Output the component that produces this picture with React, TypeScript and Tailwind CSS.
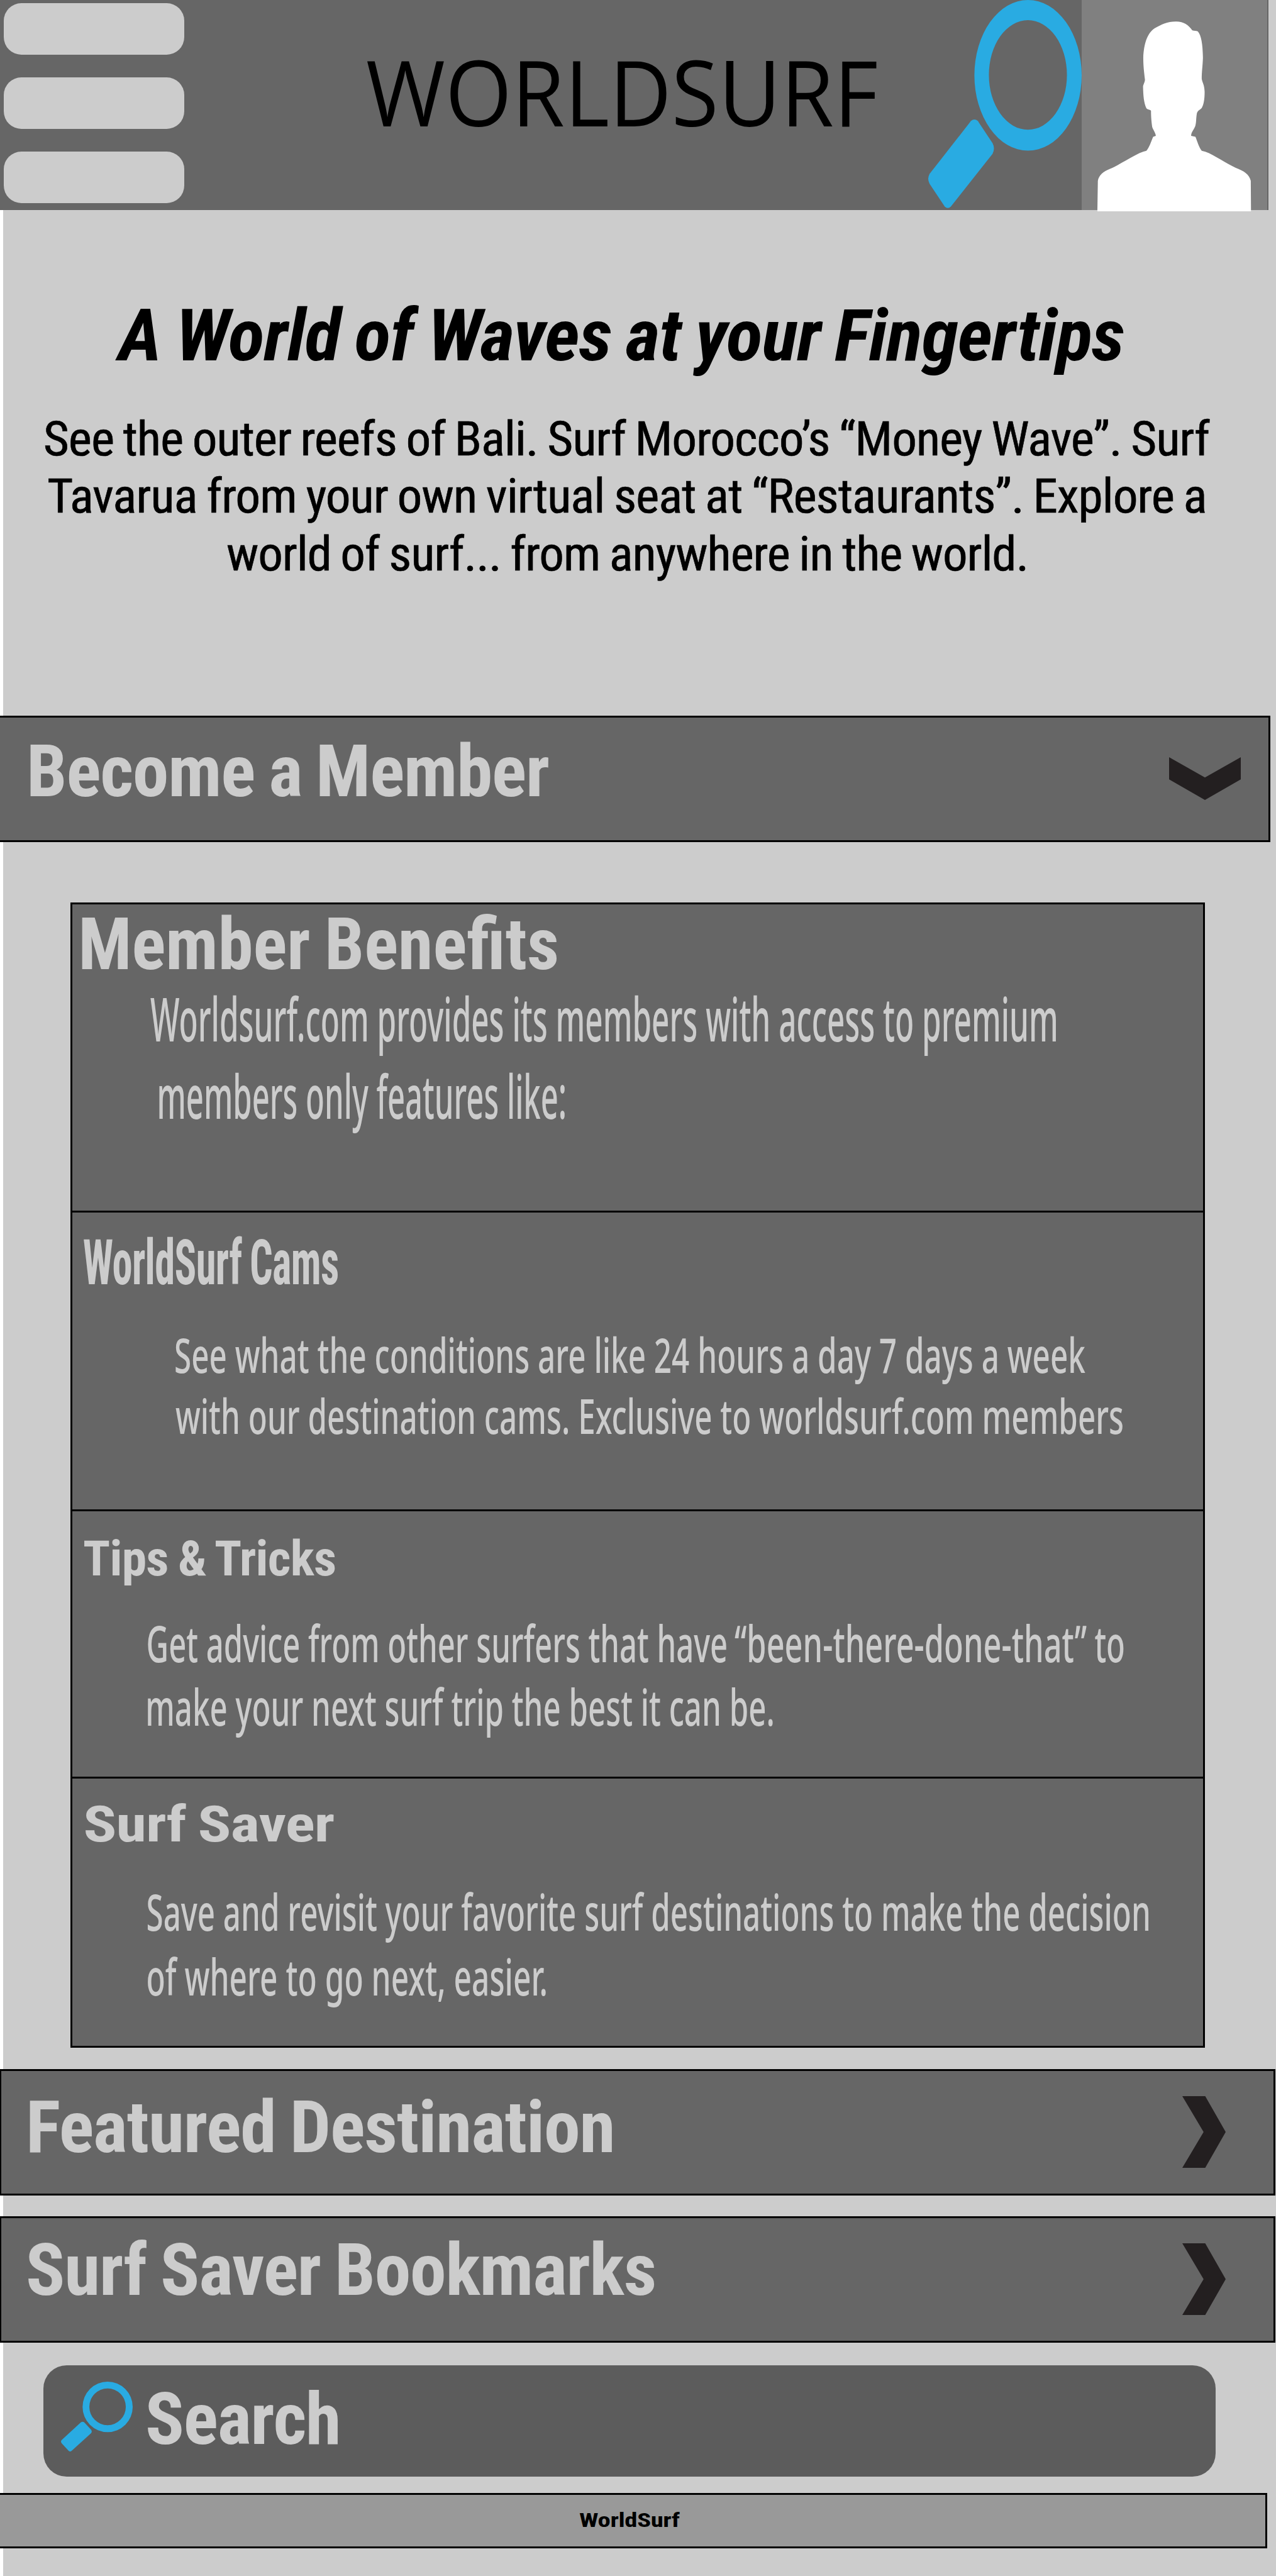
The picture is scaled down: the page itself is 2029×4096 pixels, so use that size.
import { useLayoutEffect, useRef, useState } from "react";

type LineProps = { text: string; className: string };

/** One line of text, stretched or squeezed so that its ink fills the width of its box. */
function Line({ text, className }: LineProps) {
  const box = useRef<HTMLDivElement>(null);
  const [transform, setTransform] = useState("none");

  useLayoutEffect(() => {
    const el = box.current;
    const ctx = document.createElement("canvas").getContext("2d");
    if (!el || !ctx) return;
    const cs = getComputedStyle(el);
    ctx.font = `${cs.fontStyle} ${cs.fontWeight} ${cs.fontSize} ${cs.fontFamily}`;
    const m = ctx.measureText(text);
    const tracking = (parseFloat(cs.letterSpacing) || 0) * (text.length - 1);
    const wordGaps = (parseFloat(cs.wordSpacing) || 0) * (text.split(" ").length - 1);
    const ink = m.actualBoundingBoxLeft + m.actualBoundingBoxRight + tracking + wordGaps;
    const scale = parseFloat(cs.width) / ink;
    setTransform(`translateX(${m.actualBoundingBoxLeft * scale}px) scaleX(${scale})`);
  }, [text]);

  return (
    <div ref={box} className={`whitespace-nowrap ${className}`}>
      <span className="inline-block origin-left align-top" style={{ transform }}>
        {text}
      </span>
    </div>
  );
}

function Magnifier({ className }: { className: string }) {
  return (
    <svg className={className} viewBox="129 0 635 1054" preserveAspectRatio="none" fill="#29abe2">
      <path
        fillRule="evenodd"
        d="M320 378A222 378 0 1 1 764 378A222 378 0 1 1 320 378ZM380 376A161.500 275 0 1 0 703 376A161.500 275 0 1 0 380 376Z"
      />
      <path d="M306 607Q320 592 334 607L395 718Q407 745 395 772L223 1036Q210 1052 197 1036L135 923Q123 897 135 872Z" />
    </svg>
  );
}

function Avatar() {
  return (
    <svg
      className="block h-[336px] w-[295px] shrink-0"
      viewBox="763 0 768 1061"
      preserveAspectRatio="none"
      fill="#fff"
    >
      <path d="M828 1061L830 908C834 880 852 862 880 848C910 832 935 812 1002 769Q1018 760 1031 757C1045 737 1050 710 1059 687L1070 682C1069 668 1060 655 1055 638C1052 610 1050 590 1050 556C1045 549 1037 552 1031 544C1020 515 1018 480 1017 434C1019 420 1024 415 1025 400C1021 360 1018 330 1018 290C1020 220 1035 165 1065 142C1095 121 1120 107 1155 108C1185 108 1205 125 1221 152C1228 156 1237 153 1244 158C1258 178 1264 220 1265 290C1264 330 1260 360 1260 396C1263 415 1271 425 1272 460C1272 500 1268 525 1260 542C1252 552 1245 552 1240 568C1236 595 1238 615 1233 634C1226 655 1217 662 1216 682L1234 687C1242 710 1247 737 1260 757Q1275 761 1290 769C1335 797 1365 822 1400 842C1435 858 1457 875 1463 908L1464 1061Z" />
    </svg>
  );
}

function ChevronDown() {
  return (
    <svg className="mt-[63px] h-[68px] w-[114px]" viewBox="0 0 88 133" preserveAspectRatio="none" fill="#231f20">
      <path d="M0 0L44 63L88 0V69L44 133L0 69Z" />
    </svg>
  );
}

function ChevronRight() {
  return (
    <svg className="mt-[40px] h-[114px] w-[69px]" viewBox="0 0 53 217" preserveAspectRatio="none" fill="#231f20">
      <path d="M0 0H28L53 108.500L28 217H0L26 108.500Z" />
    </svg>
  );
}

const bar = "flex justify-between border-y-[3px] border-r-[3px] border-black bg-[#666] text-[#ccc]";
const condensed = "font-['Roboto_Condensed','Roboto',sans-serif] font-bold [word-spacing:-0.03em]";
const bold = `${condensed} tracking-[-0.01em]`;
const heading = `${bold} text-[115px] leading-[115px]`;
const body = "font-['Noto_Sans','Open_Sans',sans-serif] font-medium";

export default function App() {
  return (
    <div className="h-[4096px] w-[2029px] overflow-hidden bg-[linear-gradient(to_right,#fff_5px,#ccc_5px)]">
      <header className="flex h-[334px] w-[2017px] bg-[#666]">
        <div className="flex w-[584px] shrink-0 flex-col gap-[36px] pt-[5px] pl-[6px]">
          <div className="h-[82px] w-[287px] rounded-[28px] bg-[#ccc]" />
          <div className="h-[82px] w-[287px] rounded-[28px] bg-[#ccc]" />
          <div className="h-[82px] w-[287px] rounded-[28px] bg-[#ccc]" />
        </div>
        <div className="w-[892px] shrink-0 pt-[73px]">
          <Line
            text="WORLDSURF"
            className="w-[810px] font-['Open_Sans',sans-serif] text-[144px] leading-none text-black"
          />
        </div>
        <Magnifier className="block h-[334px] w-[244px] shrink-0" />
        <div className="h-[334px] w-[295px] shrink-0 bg-[#808080]">
          <Avatar />
        </div>
      </header>

      <section className="h-[804px] pt-[142px] text-black">
        <Line
          text="A World of Waves at your Fingertips"
          className={`${heading} ml-[183px] w-[1604px] italic`}
        />
        <div className="mt-[62px] font-['Roboto_Condensed','Roboto',sans-serif] text-[76px] leading-[91.300px] font-normal tracking-[-0.015em] [word-spacing:-0.03em] [-webkit-text-stroke:0.6px_#000]">
          <Line text="See the outer reefs of Bali. Surf Morocco’s “Money Wave”. Surf" className="ml-[72px] w-[1852px]" />
          <Line text="Tavarua from your own virtual seat at “Restaurants”. Explore a" className="ml-[77px] w-[1839px]" />
          <Line text="world of surf... from anywhere in the world." className="ml-[361px] w-[1269px]" />
        </div>
      </section>

      <section className={`${bar} h-[201px] w-[2020px] pr-[44px] pl-[48px]`}>
        <Line text="Become a Member" className={`${heading} mt-[28px] w-[824px]`} />
        <ChevronDown />
      </section>

      <main className="mt-[96px] ml-[112px] h-[1821px] w-[1804px] border-x-[3px] border-b-[3px] border-black bg-[#666] text-[#ccc]">
        <section className="h-[490px] border-t-[3px] border-black pt-[9px]">
          <Line
            text="Member Benefits"
            className={`${condensed} ml-[15px] w-[756px] text-[115px] leading-[110px]`}
          />
          <div className={`${body} text-[96.600px] leading-[123px]`}>
            <Line text="Worldsurf.com provides its members with access to premium" className="ml-[124px] w-[1440px]" />
            <Line text="members only features like:" className="ml-[138px] w-[645px]" />
          </div>
        </section>
        <section className="h-[475px] border-t-[3px] border-black pt-[30px]">
          <Line text="WorldSurf Cams" className={`${bold} ml-[18px] w-[404px] text-[100.400px] leading-none`} />
          <div className={`${body} mt-[47px] text-[76.600px] leading-[97px]`}>
            <Line text="See what the conditions are like 24 hours a day 7 days a week" className="ml-[164px] w-[1447px]" />
            <Line text="with our destination cams. Exclusive to worldsurf.com members" className="ml-[164px] w-[1506px]" />
          </div>
        </section>
        <section className="h-[425px] border-t-[3px] border-black pt-[37px]">
          <Line text="Tips & Tricks" className={`${bold} ml-[18px] w-[402px] text-[78px] leading-none`} />
          <div className={`${body} mt-[45px] ml-[120px] text-[79px] leading-[100.800px]`}>
            <div className="flex gap-[13px]">
              <Line text="Get advice from other surfers that have" className="w-[920px]" />
              <Line text="“been-there-done-that”" className="w-[560px]" />
              <Line text="to" className="w-[46px]" />
            </div>
            <Line text="make your next surf trip the best it can be." className="w-[994px]" />
          </div>
        </section>
        <section className="border-t-[3px] border-black pt-[34px]">
          <Line text="Surf Saver" className={`${bold} ml-[20px] w-[396px] text-[79px] leading-none`} />
          <div className={`${body} mt-[47px] text-[80px] leading-[102.800px]`}>
            <Line text="Save and revisit your favorite surf destinations to make the decision" className="ml-[120px] w-[1591px]" />
            <Line text="of where to go next, easier." className="ml-[120px] w-[633px]" />
          </div>
        </section>
      </main>

      <section className={`${bar} mt-[34px] h-[201px] w-[2028px] border-l-2 pr-[76px] pl-[45px]`}>
        <Line text="Featured Destination" className={`${heading} mt-[32px] w-[926px]`} />
        <ChevronRight />
      </section>

      <section className={`${bar} mt-[33px] h-[201px] w-[2028px] border-l-2 pr-[76px] pl-[43px]`}>
        <Line text="Surf Saver Bookmarks" className={`${heading} mt-[25px] w-[996px]`} />
        <ChevronRight />
      </section>

      <div className="mt-[36px] ml-[69px] flex h-[177px] w-[1864px] rounded-[37px] bg-[#5c5c5c] pl-[28px] text-[#ccc]">
        <Magnifier className="mt-[26px] h-[112px] w-[114px]" />
        <Line text="Search" className={`${heading} mt-[28px] ml-[24px] w-[302px]`} />
      </div>

      <footer className="mt-[26px] h-[88px] w-[2015px] border-y-[3px] border-r-[3px] border-black bg-[#999] pt-[25px] text-black">
        <Line text="WorldSurf" className={`${bold} ml-[921px] w-[160px] text-[31px] leading-none`} />
      </footer>
    </div>
  );
}
